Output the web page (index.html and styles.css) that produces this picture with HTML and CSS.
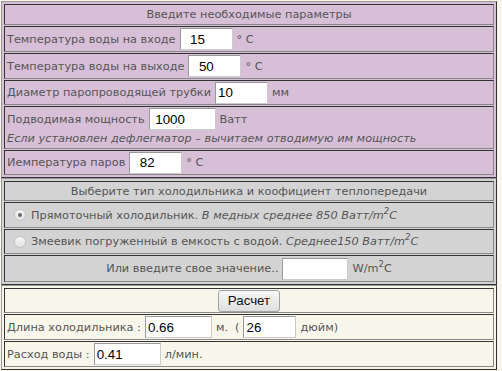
FILE: index.html
```html
<!doctype html>
<html lang="ru">
  <head>
    <meta charset="utf-8"/>
    <title>Расчет холодильника</title>
    <link rel="stylesheet" href="styles.css">
  </head>
  <body>
    <form class="calc">
      <div class="section section_params">
        <div class="cell cell_title">Введите необходимые параметры</div>
        <div class="cell">Температура воды на входе <input class="field field_short" value="  15"> ° C</div>
        <div class="cell">Температура воды на выходе <input class="field field_short" value="  50"> ° C</div>
        <div class="cell cell_low">Диаметр паропроводящей трубки <input class="field field_short" value="10"> мм</div>
        <div class="cell cell_multi">
          <div class="line">Подводимая мощность <input class="field" value=" 1000"> Ватт</div>
          <div class="note">Если установлен дефлегматор – вычитаем отводимую им мощность</div>
        </div>
        <div class="cell cell_low">Иемпература паров <input class="field field_short" value="  82"> ° C</div>
      </div>

      <div class="section section_type">
        <div class="cell cell_title">Выберите тип холодильника и коофициент теплопередачи</div>
        <label class="cell cell_radio">
          <input class="radio" type="radio" name="type" checked>
          <span>Прямоточный холодильник. <em>В медных среднее 850 Ватт/m<sup>2</sup>C</em></span>
        </label>
        <label class="cell cell_radio cell_low">
          <input class="radio" type="radio" name="type">
          <span>Змеевик погруженный в емкость с водой. <em>Среднее150 Ватт/m<sup>2</sup>C</em></span>
        </label>
        <div class="cell cell_center cell_high">Или введите свое значение.. <input class="field field_custom"> <span>W/m<sup>2</sup>C</span></div>
      </div>

      <div class="section section_result">
        <div class="cell cell_center cell_low">
          <button class="button" type="button">Расчет</button>
        </div>
        <div class="cell">Длина холодильника : <input class="field" value="0.66"> м. <span class="paren">(</span> <input class="field field_short" value="26"> дюйм)</div>
        <div class="cell">Расход воды : <input class="field" value="0.41"> л/мин.</div>
      </div>
    </form>
  </body>
</html>
```

FILE: styles.css
```css
body {
  margin: 0;
  background-color: #f8f5ea;
  font-family: "DejaVu Sans", Verdana, sans-serif;
  font-size: 11.3px;
  color: #555;
}
.calc {
  width: 496px;
  margin: 1px 0 0 1px;
  display: flex;
  flex-direction: column;
}
.section {
  display: flex;
  flex-direction: column;
  gap: 1px;
  padding: 2px;
  border: 1px solid;
  border-color: #999 #333 #333 #999;
}
.section_params {
  background-color: #d8bfd8;
}
.section_type {
  background-color: #d3d3d3;
}
.section_result {
  background-color: #f8f5ea;
}
.cell {
  display: flex;
  align-items: center;
  gap: 4px;
  min-height: 24px;
  padding: 0 2px;
  border: 1px solid;
  border-color: #333 #888 #888 #333;
}
.cell_low {
  min-height: 23px;
}
.cell_high {
  min-height: 25px;
}
.cell_title {
  justify-content: center;
  min-height: 19px;
}
.section_type .cell_title {
  min-height: 18px;
}
.cell_multi {
  display: block;
  min-height: 0;
  padding-bottom: 1px;
}
.line {
  display: flex;
  align-items: center;
  gap: 4px;
  height: 24px;
}
.note {
  font-style: italic;
  line-height: 16px;
}
.cell_center {
  justify-content: center;
}
.cell_radio {
  gap: 5px;
  padding-left: 9px;
}
em {
  font-style: italic;
}
sup {
  font-size: 8.5px;
  line-height: 0;
  vertical-align: 5px;
}
.field {
  box-sizing: border-box;
  width: 67px;
  height: 22px;
  margin: 0;
  padding: 1px 2px;
  border: 1px solid;
  border-color: #999 #ccc #ccc #999;
  background-color: #fff;
  font-family: "Liberation Sans", Arial, sans-serif;
  font-size: 13.33px;
  color: #000;
  white-space: pre;
}
.field_short {
  width: 53px;
}
.field_custom {
  width: 66px;
}
.paren {
  margin-left: 3px;
}
.radio {
  appearance: none;
  box-sizing: border-box;
  width: 12px;
  height: 12px;
  margin: 0;
  border: 1px solid #c4c4c4;
  border-radius: 50%;
  background: linear-gradient(#f6f6f6, #e2e2e2);
  display: flex;
  align-items: center;
  justify-content: center;
}
.radio:checked::after {
  content: "";
  width: 4px;
  height: 4px;
  border-radius: 50%;
  background-color: #666;
}
.button {
  height: 22px;
  padding: 0 9px;
  border: 1px solid #a3a3a3;
  border-radius: 3px;
  background: linear-gradient(#f7f7f7, #dedede);
  font-family: "Liberation Sans", Arial, sans-serif;
  font-size: 13.33px;
  color: #111;
  cursor: pointer;
}
```
